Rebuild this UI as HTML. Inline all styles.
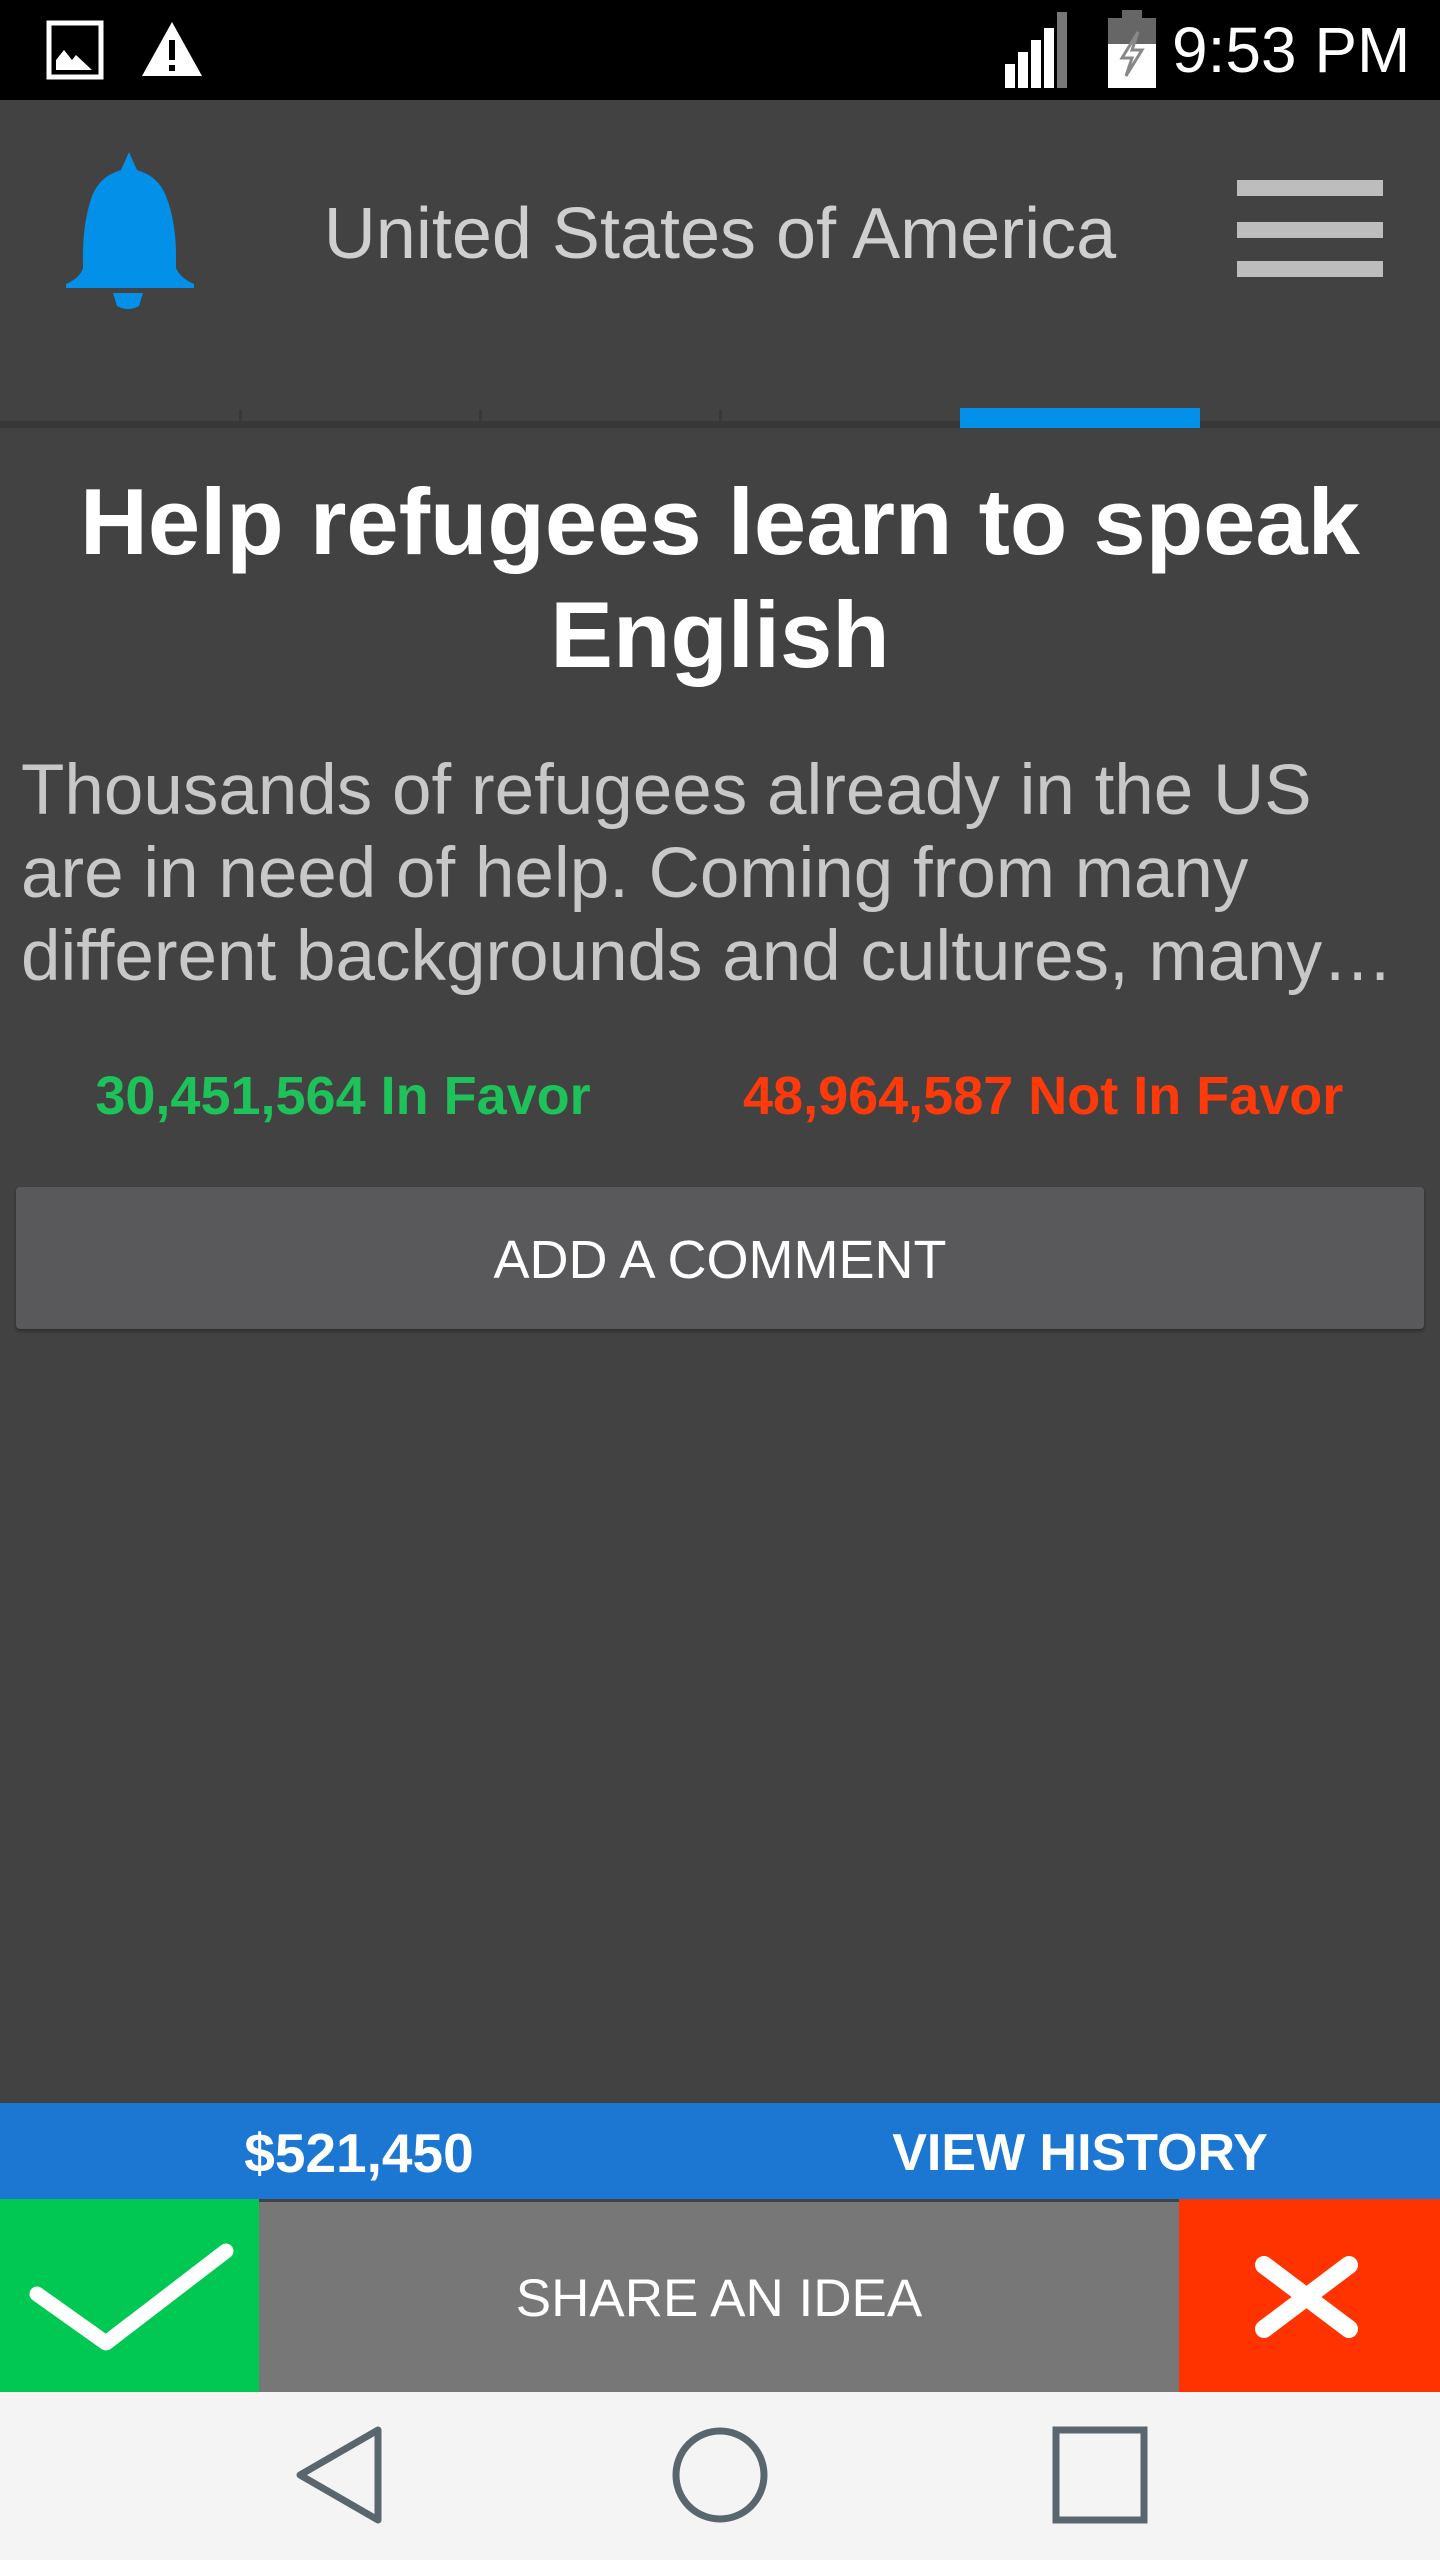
<!DOCTYPE html>
<html><head><meta charset="utf-8"><style>
*{margin:0;padding:0;box-sizing:border-box}
body{width:1440px;height:2560px;background:#424242;font-family:"Liberation Sans",sans-serif;position:relative;overflow:hidden}
.a{position:absolute;white-space:nowrap}
.c{text-align:center}
</style></head><body>
<div class="a" style="left:0;top:0;width:1440px;height:100px;background:#000"></div>
<svg class="a" style="left:46px;top:20px" width="60" height="60" viewBox="0 0 60 60"><rect x="3" y="3" width="52" height="54" fill="none" stroke="#fff" stroke-width="5"/><path d="M10 50 L10 40 L18 30 L26 40 L30 35 L46 50 Z" fill="#fff"/></svg>
<svg class="a" style="left:140px;top:20px" width="64" height="58" viewBox="0 0 64 58"><path d="M32 2 L62 56 L2 56 Z" fill="#fff"/><rect x="29" y="20" width="6" height="20" fill="#000"/><rect x="29" y="45" width="6" height="6" fill="#000"/></svg>
<svg class="a" style="left:1005px;top:12px" width="80" height="76" viewBox="0 0 80 76"><rect x="0" y="52" width="10" height="24" fill="#fff"/><rect x="13" y="40" width="10" height="36" fill="#fff"/><rect x="26" y="28" width="10" height="48" fill="#fff"/><rect x="39" y="16" width="10" height="60" fill="#fff"/><rect x="52" y="0" width="10" height="76" fill="#777"/></svg>
<svg class="a" style="left:1108px;top:10px" width="48" height="78" viewBox="0 0 48 78"><rect x="14" y="0" width="20" height="8" fill="#666"/><rect x="0" y="8" width="48" height="26" fill="#666"/><rect x="0" y="34" width="48" height="44" fill="#fff"/><path d="M30 22 L14 48 L24 48 L18 66 L34 40 L24 40 Z" fill="none" stroke="#888" stroke-width="3"/></svg>
<div class="a" style="left:1172px;top:14px;font-size:64px;color:#fff;line-height:72px">9:53 PM</div>
<svg class="a" style="left:0;top:0" width="260" height="330" viewBox="0 0 260 330"><path d="M129 152 L137 170 Q158 176 166 196 Q176 222 176 255 L176 268 Q180 278 194 284 L194 288 L66 288 L66 284 Q80 278 83 268 L83 255 Q83 222 92 196 Q100 176 121 170 Z" fill="#0390e8"/><path d="M113 293 L143 293 L139 306 Q128 312 117 306 Z" fill="#0390e8"/></svg>
<div class="a c" style="left:170px;top:192px;width:1100px;font-size:72px;color:#cfcfcf;line-height:84px">United States of America</div>
<div class="a" style="left:1237px;top:180px;width:146px;height:16px;background:#bdbdbd"></div>
<div class="a" style="left:1237px;top:222px;width:146px;height:16px;background:#bdbdbd"></div>
<div class="a" style="left:1237px;top:261px;width:146px;height:16px;background:#bdbdbd"></div>
<div class="a" style="left:0;top:421px;width:1440px;height:7px;background:#383838"></div>
<div class="a" style="left:239px;top:410px;width:3px;height:14px;background:#383838"></div>
<div class="a" style="left:479px;top:410px;width:3px;height:14px;background:#383838"></div>
<div class="a" style="left:719px;top:410px;width:3px;height:14px;background:#383838"></div>
<div class="a" style="left:960px;top:408px;width:240px;height:20px;background:#0390e8"></div>
<div class="a c" style="left:0;top:465px;width:1440px;font-size:94px;font-weight:bold;color:#fff;line-height:113px">Help refugees learn to speak<br>English</div>
<div class="a" style="left:21px;top:749px;font-size:71px;color:#c8c8c8;line-height:83px">Thousands of refugees already in the US<br>are in need of help. Coming from many<br>different backgrounds and cultures, many…</div>
<div class="a c" style="left:43px;top:1065px;width:600px;font-size:54px;font-weight:bold;color:#1ec25a;line-height:62px">30,451,564 In Favor</div>
<div class="a c" style="left:743px;top:1065px;width:600px;font-size:54px;font-weight:bold;color:#ff3a0a;line-height:62px">48,964,587 Not In Favor</div>
<div class="a c" style="left:16px;top:1187px;width:1408px;height:142px;background:#59595b;border-radius:4px;box-shadow:0 2px 3px rgba(0,0,0,.35);font-size:54px;color:#fff;line-height:146px">ADD A COMMENT</div>
<div class="a" style="left:0;top:2103px;width:1440px;height:96px;background:#1c77d3"></div>
<div class="a c" style="left:159px;top:2105px;width:400px;font-size:55px;font-weight:bold;color:#fff;line-height:96px">$521,450</div>
<div class="a c" style="left:830px;top:2105px;width:500px;font-size:52px;font-weight:bold;color:#fff;line-height:96px">VIEW HISTORY</div>
<div class="a" style="left:0;top:2199px;width:259px;height:193px;background:#00c853"></div>
<div class="a c" style="left:259px;top:2202px;width:920px;height:193px;background:#777;font-size:53px;color:#fff;line-height:193px">SHARE AN IDEA</div>
<div class="a" style="left:1179px;top:2199px;width:261px;height:193px;background:#ff3300"></div>
<svg class="a" style="left:0;top:2199px" width="259" height="193" viewBox="0 0 259 193"><path d="M37 95 L106 144 L226 52" fill="none" stroke="#fff" stroke-width="15" stroke-linecap="round" stroke-linejoin="round"/></svg>
<svg class="a" style="left:1179px;top:2199px" width="261" height="193" viewBox="0 0 261 193"><path d="M85 66 L170 130 M170 66 L85 130" fill="none" stroke="#fff" stroke-width="18" stroke-linecap="round"/></svg>
<div class="a" style="left:0;top:2392px;width:1440px;height:168px;background:#f4f4f4"></div>
<svg class="a" style="left:290px;top:2425px" width="100" height="100" viewBox="0 0 100 100"><path d="M88 5 L88 95 L10 50 Z" fill="none" stroke="#5a666e" stroke-width="7" stroke-linejoin="round"/></svg>
<svg class="a" style="left:670px;top:2425px" width="100" height="100" viewBox="0 0 100 100"><circle cx="50" cy="50" r="44" fill="none" stroke="#5a666e" stroke-width="7"/></svg>
<svg class="a" style="left:1050px;top:2425px" width="100" height="100" viewBox="0 0 100 100"><rect x="6" y="5" width="88" height="90" fill="none" stroke="#5a666e" stroke-width="7"/></svg>
</body></html>
